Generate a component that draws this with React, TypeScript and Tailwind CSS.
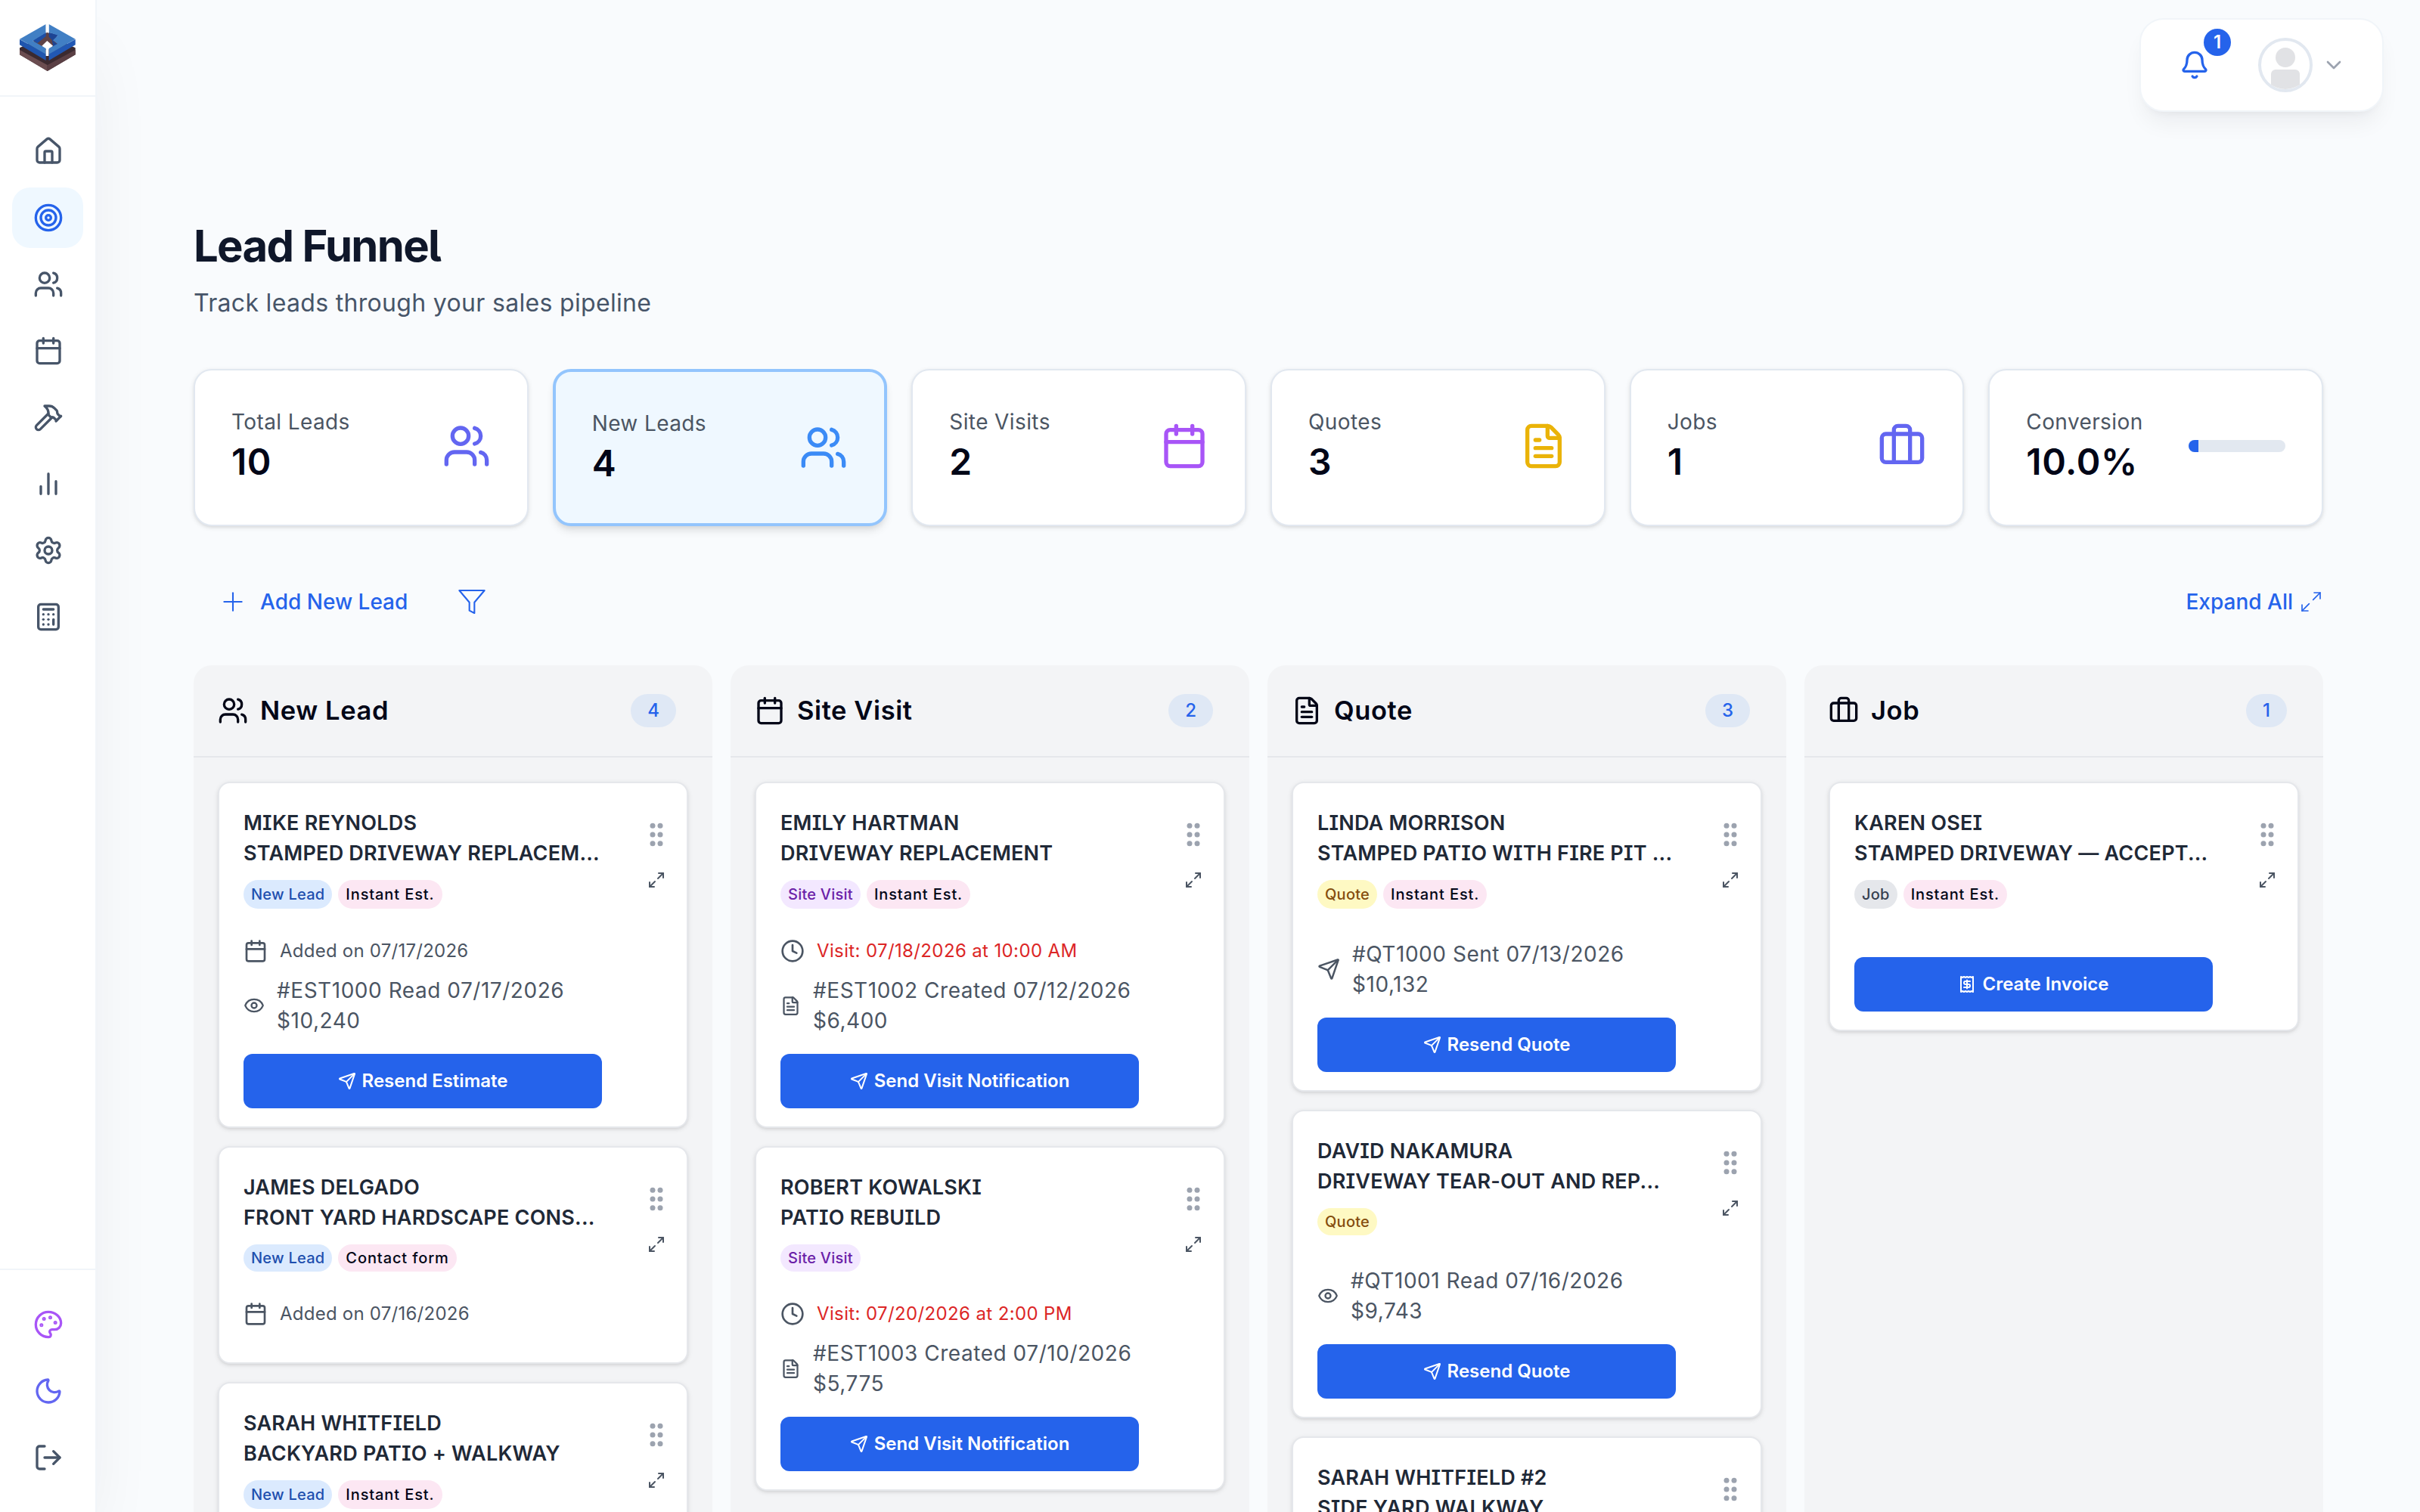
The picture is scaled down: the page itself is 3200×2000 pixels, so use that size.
import type { ReactNode } from 'react'
import {
  Bell,
  Briefcase,
  Calculator,
  Calendar,
  ChevronDown,
  Clock,
  Eye,
  FileText,
  Hammer,
  House,
  LogOut,
  Maximize2,
  Moon,
  Palette,
  Plus,
  Receipt,
  Send,
  Settings,
  Target,
  Users,
} from 'lucide-react'

type Document = { kind: 'read' | 'created' | 'sent'; text: string; amount: string }

type Lead = {
  name: string
  project: string
  source?: string
  added?: string
  visit?: string
  doc?: Document
  action?: string
}

const newLeads: Lead[] = [
  {
    name: 'MIKE REYNOLDS',
    project: 'STAMPED DRIVEWAY REPLACEM...',
    source: 'Instant Est.',
    added: 'Added on 07/17/2026',
    doc: { kind: 'read', text: '#EST1000 Read 07/17/2026', amount: '$10,240' },
    action: 'Resend Estimate',
  },
  {
    name: 'JAMES DELGADO',
    project: 'FRONT YARD HARDSCAPE CONS...',
    source: 'Contact form',
    added: 'Added on 07/16/2026',
  },
  {
    name: 'SARAH WHITFIELD',
    project: 'BACKYARD PATIO + WALKWAY',
    source: 'Instant Est.',
  },
]

const siteVisits: Lead[] = [
  {
    name: 'EMILY HARTMAN',
    project: 'DRIVEWAY REPLACEMENT',
    source: 'Instant Est.',
    visit: 'Visit: 07/18/2026 at 10:00 AM',
    doc: { kind: 'created', text: '#EST1002 Created 07/12/2026', amount: '$6,400' },
    action: 'Send Visit Notification',
  },
  {
    name: 'ROBERT KOWALSKI',
    project: 'PATIO REBUILD',
    visit: 'Visit: 07/20/2026 at 2:00 PM',
    doc: { kind: 'created', text: '#EST1003 Created 07/10/2026', amount: '$5,775' },
    action: 'Send Visit Notification',
  },
]

const quotes: Lead[] = [
  {
    name: 'LINDA MORRISON',
    project: 'STAMPED PATIO WITH FIRE PIT ...',
    source: 'Instant Est.',
    doc: { kind: 'sent', text: '#QT1000 Sent 07/13/2026', amount: '$10,132' },
    action: 'Resend Quote',
  },
  {
    name: 'DAVID NAKAMURA',
    project: 'DRIVEWAY TEAR-OUT AND REP...',
    doc: { kind: 'read', text: '#QT1001 Read 07/16/2026', amount: '$9,743' },
    action: 'Resend Quote',
  },
  {
    name: 'SARAH WHITFIELD #2',
    project: 'SIDE YARD WALKWAY',
  },
]

const jobs: Lead[] = [
  {
    name: 'KAREN OSEI',
    project: 'STAMPED DRIVEWAY — ACCEPT...',
    source: 'Instant Est.',
    action: 'Create Invoice',
  },
]

function Logo() {
  return (
    <svg viewBox="0 0 264 246" className="h-[82px] w-[88px]">
      <path d="M18 124 126 72 239 124V151L128 216 18 151Z" fill="#3b2a30" />
      <path d="M18 132 128 192V216L18 151Z" fill="#6b4d50" />
      <path d="M239 132 128 192V216L239 151Z" fill="#5a3f44" />
      <path d="M72 100 127 62 172 84 176 116 128 150Z" fill="#5f4346" />
      <path d="M127 96 150 116 128 136 106 116Z" fill="#fff" />
      <path d="M18 90 122 148V174L18 112Z" fill="#1f55ae" />
      <path d="M239 90 134 148V174L239 112Z" fill="#2158b4" />
      <path d="M70 94 122 62V78L88 106Z" fill="#1d4fa6" />
      <path d="M134 62 172 72 150 96 170 112 152 122 146 92 134 80Z" fill="#1d4494" />
      <path d="M122 30 18 89 122 149V126L70 96 122 64Z" fill="#417fc4" />
      <path d="M134 30 239 89 134 149V126L168 108 150 94 170 74 134 62Z" fill="#417fc4" />
      <path d="M122 28h11v34h-11ZM122 132h11v24h-11Z" fill="#fff" />
    </svg>
  )
}

function BarsIcon({ className }: { className?: string }) {
  return (
    <svg viewBox="0 0 24 24" fill="none" stroke="currentColor" strokeWidth="2" strokeLinecap="round" className={className}>
      <path d="M18 20V10M12 20V4M6 20v-6" />
    </svg>
  )
}

function NavItem({ active, children }: { active?: boolean; children: ReactNode }) {
  return (
    <a
      className={
        active
          ? 'flex h-20 items-center rounded-3xl bg-[#eff8ff] pl-7 text-[#2563eb]'
          : 'flex h-20 items-center rounded-3xl pl-7 text-[#475569]'
      }
    >
      {children}
    </a>
  )
}

function Sidebar() {
  return (
    <aside className="z-10 flex w-32 shrink-0 flex-col border-r-2 border-[#f1f5f9] bg-white shadow-[0_50px_100px_-24px_rgba(15,23,42,0.09)]">
      <div className="h-32 shrink-0 border-b-2 border-[#f1f5f9] pl-5 pt-[22px]">
        <Logo />
      </div>
      <nav className="flex flex-1 flex-col gap-2 px-4 py-8">
        <NavItem><House className="size-10" /></NavItem>
        <NavItem active><Target className="size-10" /></NavItem>
        <NavItem><Users className="size-10" /></NavItem>
        <NavItem><Calendar className="size-10" /></NavItem>
        <NavItem><Hammer className="size-10" /></NavItem>
        <NavItem><BarsIcon className="size-10" /></NavItem>
        <NavItem><Settings className="size-10" /></NavItem>
        <NavItem><Calculator className="size-10" /></NavItem>
      </nav>
      <div className="flex flex-col gap-2 border-t-2 border-[#f1f5f9] px-4 py-8">
        <NavItem><Palette className="size-10 text-[#a855f7]" /></NavItem>
        <NavItem><Moon className="size-10 text-[#6366f1]" /></NavItem>
        <NavItem><LogOut className="size-10" /></NavItem>
      </div>
    </aside>
  )
}

function UserMenu() {
  return (
    <div className="flex h-[124px] items-center rounded-[32px] border-2 border-[#f1f5f9] bg-white pl-[51px] pr-12 shadow-[0_20px_30px_-6px_rgba(15,23,42,0.06),0_8px_12px_-8px_rgba(15,23,42,0.06)]">
      <div className="relative mr-16 text-[#2563eb]">
        <Bell className="size-10" />
        <span className="absolute -top-7 left-8 flex size-9 items-center justify-center rounded-full bg-[#2563eb] text-2xl font-semibold text-white">
          1
        </span>
      </div>
      <div className="mr-3 flex size-[72px] flex-col items-center overflow-hidden rounded-full border-4 border-[#e2e8f0] bg-white pt-[9px]">
        <div className="size-[26px] shrink-0 rounded-full bg-[#e1e2e5]" />
        <div className="mt-[3px] h-10 w-[38px] shrink-0 rounded-t-md bg-[#e1e2e5]" />
      </div>
      <ChevronDown className="size-8 text-[#9ca3af]" />
    </div>
  )
}

function StatCard({ label, value, selected, children }: { label: string; value: string; selected?: boolean; children: ReactNode }) {
  return (
    <div
      className={
        selected
          ? 'h-[208px] rounded-3xl border-4 border-[#93c5fd] bg-[#eff8ff] p-12 shadow-[0_8px_12px_-2px_rgba(0,0,0,0.1),0_4px_8px_-4px_rgba(0,0,0,0.1)]'
          : 'h-[208px] rounded-3xl border-2 border-[#e2e8f0] bg-white p-12 shadow-[0_2px_6px_rgba(0,0,0,0.1),0_2px_4px_-2px_rgba(0,0,0,0.1)]'
      }
    >
      <div className="flex h-[104px] items-center justify-between">
        <div>
          <p className="text-[28px] leading-10 tracking-[0.014em] text-[#4b5563]">{label}</p>
          <p className="pt-px text-5xl leading-[63px] font-semibold tracking-[0.012em] text-[#020617]">{value}</p>
        </div>
        {children}
      </div>
    </div>
  )
}

const tagStyles = {
  'New Lead': 'bg-[#dbeafe] text-[#1e4fae]',
  'Site Visit': 'bg-[#f3e8ff] text-[#6b21a8]',
  Quote: 'bg-[#fef9c3] text-[#854d0e]',
  Job: 'bg-[#e5e7eb] text-[#374151]',
}

type Stage = keyof typeof tagStyles

function DocIcon({ kind }: { kind: Document['kind'] }) {
  if (kind === 'read') return <Eye className="size-7 shrink-0" />
  if (kind === 'created') return <FileText className="size-[27px] shrink-0" />
  return <Send className="size-[30px] shrink-0" />
}

function LeadCard({ stage, lead }: { stage: Stage; lead: Lead }) {
  return (
    <div className="flex justify-between rounded-2xl border-2 border-[#e5e7eb] bg-white shadow-[0_2px_6px_rgba(0,0,0,0.1),0_2px_4px_-2px_rgba(0,0,0,0.1)]">
      <div className="w-[506px] pt-[33px] pb-6 pl-8">
        <div className="text-[27px] leading-10 font-semibold tracking-[0.008em] whitespace-nowrap text-[#1f2937] [font-feature-settings:'cv08']">
          <p>{lead.name}</p>
          <p>{lead.project}</p>
        </div>
        <div className={lead.source === 'Instant Est.' ? 'mt-[15px] flex h-[38px] gap-2' : 'mt-[15px] flex h-9 gap-2'}>
          <span className={`flex items-center rounded-full px-[10px] text-xl font-medium tracking-[0.012em] ${tagStyles[stage]}`}>
            {stage}
          </span>
          {lead.source && (
            <span className="flex items-center rounded-full bg-[#fce7f3] px-[10px] text-xl font-[450] tracking-[0.045em] text-[#020617]">
              {lead.source}
            </span>
          )}
        </div>
        <div className="mt-10 flex flex-col gap-4 text-[#4b5563]">
          {lead.added && (
            <div className="flex items-center gap-4">
              <Calendar className="size-8" />
              <span className="text-2xl leading-8 tracking-[0.01em]">{lead.added}</span>
            </div>
          )}
          {lead.visit && (
            <div className="flex items-center gap-4">
              <Clock className="size-8" />
              <span className="text-2xl leading-8 tracking-[0.0155em] text-[#dc2626]">{lead.visit}</span>
            </div>
          )}
          {lead.doc && (
            <div className="flex items-center gap-4">
              <DocIcon kind={lead.doc.kind} />
              <div className="text-[28px] leading-10 tracking-[0.019em] whitespace-nowrap">
                <p>{lead.doc.text}</p>
                <p>{lead.doc.amount}</p>
              </div>
            </div>
          )}
        </div>
        <div className="mt-6">
          {lead.action && (
            <button className="flex h-[72px] w-full items-center justify-center gap-2 rounded-xl bg-[#2563eb] text-2xl font-semibold text-white">
              {stage === 'Job' ? <Receipt className="size-6" /> : <Send className="size-6" />}
              {lead.action}
            </button>
          )}
        </div>
      </div>
      <div className="flex w-20 flex-col items-center gap-5 pt-12">
        <svg viewBox="0 0 40 40" className="size-10 text-[#9ca3af]" fill="currentColor">
          <circle cx="15" cy="8.3" r="3.5" />
          <circle cx="25" cy="8.3" r="3.5" />
          <circle cx="15" cy="20" r="3.5" />
          <circle cx="25" cy="20" r="3.5" />
          <circle cx="15" cy="31.7" r="3.5" />
          <circle cx="25" cy="31.7" r="3.5" />
        </svg>
        <div className="flex size-10 items-center justify-center">
          <Maximize2 className="size-6 text-[#4b5563]" />
        </div>
      </div>
    </div>
  )
}

function Column({ stage, count, icon, leads }: { stage: Stage; count: number; icon: ReactNode; leads: Lead[] }) {
  return (
    <section className="min-h-[1200px] rounded-t-3xl bg-[#f3f4f6]">
      <div className="flex h-[122px] items-center justify-between border-b-2 border-[#e5e7eb] pr-12 pl-8 text-[#020617]">
        <div className="flex items-center gap-4">
          {icon}
          <h2 className="text-[34.5px] font-semibold tracking-[0.017em]">{stage}</h2>
        </div>
        <span className="flex h-11 items-center justify-center rounded-full bg-[#dfe8f5] px-[22px] text-2xl font-medium text-[#2563eb]">
          {count}
        </span>
      </div>
      <div className="flex flex-col gap-6 p-8">
        {leads.map((lead) => (
          <LeadCard key={lead.name} stage={stage} lead={lead} />
        ))}
      </div>
    </section>
  )
}

export default function App() {
  return (
    <div className="flex h-screen w-full overflow-hidden bg-[#f9fbfd] font-['Inter',sans-serif]">
      <Sidebar />
      <div className="flex-1">
        {/* Top bar */}
        <header className="flex justify-end pt-6 pr-12">
          <UserMenu />
        </header>

        <main className="px-32 pt-[137px]">
          <h1 className="text-[58px] leading-[80px] font-bold tracking-[-0.029em] text-[#0f172a] [font-feature-settings:'cv05']">
            Lead Funnel
          </h1>
          <p className="mt-3 text-[32px] leading-[48px] tracking-[0.01em] text-[#475569]">
            Track leads through your sales pipeline
          </p>

          {/* Stats */}
          <div className="mt-[63px] grid grid-cols-6 gap-8">
            <StatCard label="Total Leads" value="10"><Users className="size-16 text-[#6366f1]" /></StatCard>
            <StatCard label="New Leads" value="4" selected><Users className="size-16 text-[#3b8bf6]" /></StatCard>
            <StatCard label="Site Visits" value="2"><Calendar className="size-16 text-[#a855f7]" /></StatCard>
            <StatCard label="Quotes" value="3"><FileText className="size-16 text-[#eab308]" /></StatCard>
            <StatCard label="Jobs" value="1"><Briefcase className="size-16 text-[#6366f1]" /></StatCard>
            <StatCard label="Conversion" value="10.0%">
              <div className="h-4 w-32 overflow-hidden rounded-full bg-[#e2e8f0]">
                <div className="h-full w-[10%] bg-[#2563eb]" />
              </div>
            </StatCard>
          </div>

          {/* Toolbar */}
          <div className="mt-[60px] flex h-20 items-center justify-between text-[28px] font-medium text-[#2563eb]">
            <div className="flex items-center pl-8">
              <Plus className="mr-4 size-10" strokeWidth={1.25} />
              Add New Lead
              <svg viewBox="0 0 24 24" className="ml-[65px] size-10" fill="none" stroke="currentColor" strokeWidth="1.25" strokeLinejoin="round">
                <path d="M22 3H2l8 9.46V19l4 2v-8.54L22 3z" />
              </svg>
            </div>
            <div className="flex items-center gap-2">
              Expand All
              <Maximize2 className="size-8" strokeWidth={1.25} />
            </div>
          </div>

          {/* Board */}
          <div className="mt-[44px] grid grid-cols-4 gap-6">
            <Column stage="New Lead" count={4} icon={<Users className="size-10" />} leads={newLeads} />
            <Column stage="Site Visit" count={2} icon={<Calendar className="size-10" />} leads={siteVisits} />
            <Column stage="Quote" count={3} icon={<FileText className="size-10" />} leads={quotes} />
            <Column stage="Job" count={1} icon={<Briefcase className="size-10" />} leads={jobs} />
          </div>
        </main>
      </div>
    </div>
  )
}
